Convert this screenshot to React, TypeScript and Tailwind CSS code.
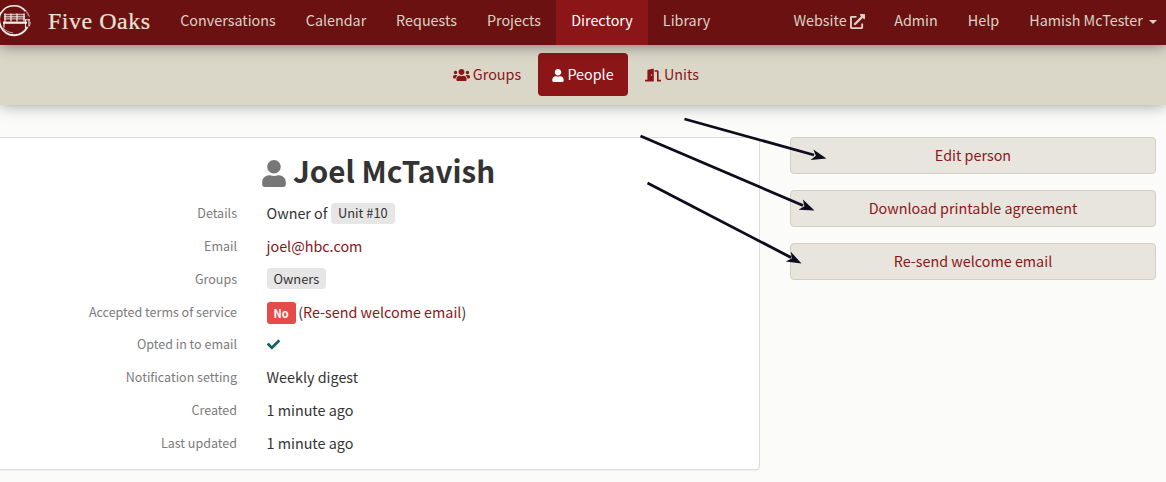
import type { ReactNode } from "react";
import { FaCheck, FaDoorOpen, FaExternalLinkAlt, FaUser, FaUsers } from "react-icons/fa";

function Logo() {
  return (
    <svg className="block h-[34px] w-[34px]" viewBox="0 0 34 34" fill="none" stroke="#f3efe9">
      <path d="M3 9C6 4 10 2 15.500 1.800c5-.2 9 2 12 5.500" strokeWidth="1.500" />
      <path d="M20 1.500c6 2 10 6 11.500 11.500M24 4c3 2 5 4.500 6.500 8" strokeWidth="0.800" opacity="0.6" />
      <path d="M3 8.500C1 12 .8 17 2.500 21.500" strokeWidth="1.600" />
      <path d="M2 21c3 7 8 10.300 14.500 10.200 6-.2 10-3 13-8.200" strokeWidth="1.900" />
      <path d="M5 24c3 3 6 4.500 10 4.800M30.500 23c1.300-1.500 1.800-3 2-5" strokeWidth="0.800" opacity="0.8" />
      <path d="M6 10.500h21M6 12.700h21M6 14.900h21" strokeWidth="1.400" opacity="0.7" />
      <path d="M7 9.500v9M13 9.500v8M19 9.500v8M26 9.500v8" strokeWidth="1.200" />
      <path d="M5 18.700h24" strokeWidth="2.200" />
      <path d="M6 19v4.500M27.500 15.500v9M31 15.500v6.500" strokeWidth="1.100" />
      <path d="M27 15.800h5" strokeWidth="1" />
    </svg>
  );
}

function NavItem({ width, active, children }: { width: string; active?: boolean; children: ReactNode }) {
  return (
    <a className={`flex h-full items-center justify-center pb-[5px] whitespace-nowrap ${width} ${active ? "bg-[#8c1517] text-white" : "text-[#dbd3c6]"}`}>
      {children}
    </a>
  );
}

function Row({ label, children }: { label: string; children: ReactNode }) {
  return (
    <div className="flex h-[32.850px] items-center">
      <dt className="w-[237px] text-right text-[12.500px] leading-5 text-[#7b7b7b]">{label}</dt>
      <dd className="ml-[29.500px] flex items-center gap-[3.500px]">{children}</dd>
    </div>
  );
}

function Pill({ children }: { children: ReactNode }) {
  return <span className="flex h-[21px] items-center rounded-[4px] bg-[#e6e6e6] px-[7px] text-[12.850px]">{children}</span>;
}

function Action({ children }: { children: ReactNode }) {
  return (
    <button className="flex h-[37px] w-full items-center justify-center rounded-[4px] border border-[#d5cfbf] bg-[#e8e5df] pb-px text-[#8c1517]">
      {children}
    </button>
  );
}

export default function App() {
  return (
    <div className="relative h-[482px] w-[1166px] overflow-hidden bg-[#fbfbf9] font-['Noto_Sans_CJK_SC',sans-serif] text-[14.350px] leading-5 text-[#333]">
      <nav className="relative z-20 flex h-[45px] bg-[#6b1111] shadow-[0_0_15px_rgba(0,0,0,0.5)]">
        <div className="flex w-[165px] items-center pb-[4px]">
          <div className="-ml-[2px] w-[34px]"><Logo /></div>
          <span className="ml-[16px] font-['Liberation_Serif',serif] text-[24px] tracking-[0.5px] whitespace-nowrap text-[#e9e2d6] [-webkit-text-stroke:0.2px_#e9e2d6]">Five Oaks</span>
        </div>
        <NavItem width="w-[126px]">Conversations</NavItem>
        <NavItem width="w-[90px]">Calendar</NavItem>
        <NavItem width="w-[91px]">Requests</NavItem>
        <NavItem width="w-[84px]">Projects</NavItem>
        <NavItem width="w-[92px]" active>Directory</NavItem>
        <NavItem width="w-[77px]">Library</NavItem>
        <div className="ml-auto flex">
          <NavItem width="w-[100px]">Website<FaExternalLinkAlt className="mt-[2px] ml-[3px] h-[15px] w-[15px]" /></NavItem>
          <NavItem width="w-[74px]">Admin</NavItem>
          <NavItem width="w-[61px]">Help</NavItem>
          <NavItem width="w-[152px] pl-[6px]">
            Hamish McTester
            <svg className="ml-[6px] mt-[4px] h-1 w-2" viewBox="0 0 8 4" fill="currentColor"><path d="M0 0h8L4 4z" /></svg>
          </NavItem>
        </div>
      </nav>
      <div className="relative z-10 flex h-[60px] justify-center bg-[#dad7c9] pt-2 text-[#8c1517] shadow-[0_0_15px_rgba(0,0,0,0.4)]">
        <div className="flex h-[43px] w-[104px] items-center justify-center gap-[3px] pb-px pl-[2px]"><FaUsers className="mt-[2px] h-[14px] w-[17px]" />Groups</div>
        <div className="flex h-[43px] w-[90px] items-center justify-center gap-[3px] rounded-[4px] bg-[#8c1517] pb-px text-white"><FaUser className="mt-[2px] h-[13px] w-[12px]" />People</div>
        <div className="flex h-[43px] w-[104px] items-center gap-[3px] pb-px pl-[17px]"><FaDoorOpen className="mt-[2px] h-[14px] w-[16px]" />Units</div>
      </div>
      <main className="flex pt-[32px]">
        <section className="-ml-[5px] h-[333px] w-[765px] rounded-[4px] border border-[#dcdcdc] bg-white pl-[4px] shadow-[0_1px_1px_rgba(0,0,0,0.05)]">
          <h1 className="ml-[262px] flex h-[58.700px] items-center gap-[7px] pt-[11px] text-[29.600px] leading-9 font-bold">
            <FaUser className="mt-[2px] h-[27px] w-[24px] text-[#777]" />
            <span className="-mt-[3px] whitespace-nowrap">Joel McTavish</span>
          </h1>
          <dl>
            <Row label="Details">Owner of <Pill>Unit #10</Pill></Row>
            <Row label="Email"><a className="text-[#8c1517]">joel@hbc.com</a></Row>
            <Row label="Groups"><Pill>Owners</Pill></Row>
            <Row label="Accepted terms of service">
              <span className="mt-[2px] flex h-[22px] items-center rounded-[3px] bg-[#e64c47] px-[7px] text-[11px] font-bold text-white">No</span>
              <span className="-ml-px">(<a className="text-[#8c1517]">Re-send welcome email</a>)</span>
            </Row>
            <Row label="Opted in to email"><FaCheck className="h-[13px] w-[13px] text-[#0e625e]" /></Row>
            <Row label="Notification setting">Weekly digest</Row>
            <Row label="Created">1 minute ago</Row>
            <Row label="Last updated">1 minute ago</Row>
          </dl>
        </section>
        <aside className="ml-[30px] flex w-[366px] flex-col gap-4">
          <Action>Edit person</Action>
          <Action>Download printable agreement</Action>
          <Action>Re-send welcome email</Action>
        </aside>
      </main>
      <svg className="pointer-events-none absolute inset-0 z-30" width="1166" height="482" fill="#0c0c1d" stroke="#0c0c1d">
        <g strokeWidth="2.800">
          <path d="M684.500 119L814 155" />
          <path d="M640.500 136L803 205.500" />
          <path d="M647.500 183L791 257.500" />
        </g>
        <g stroke="none">
          <path transform="translate(826.500 158.500) rotate(14.500)" d="M0 0L-15 5.500L-11 0L-15-5.500z" />
          <path transform="translate(814.500 210.500) rotate(23.200)" d="M0 0L-15 5.500L-11 0L-15-5.500z" />
          <path transform="translate(801.500 263.500) rotate(27.600)" d="M0 0L-15 5.500L-11 0L-15-5.500z" />
        </g>
      </svg>
    </div>
  );
}
